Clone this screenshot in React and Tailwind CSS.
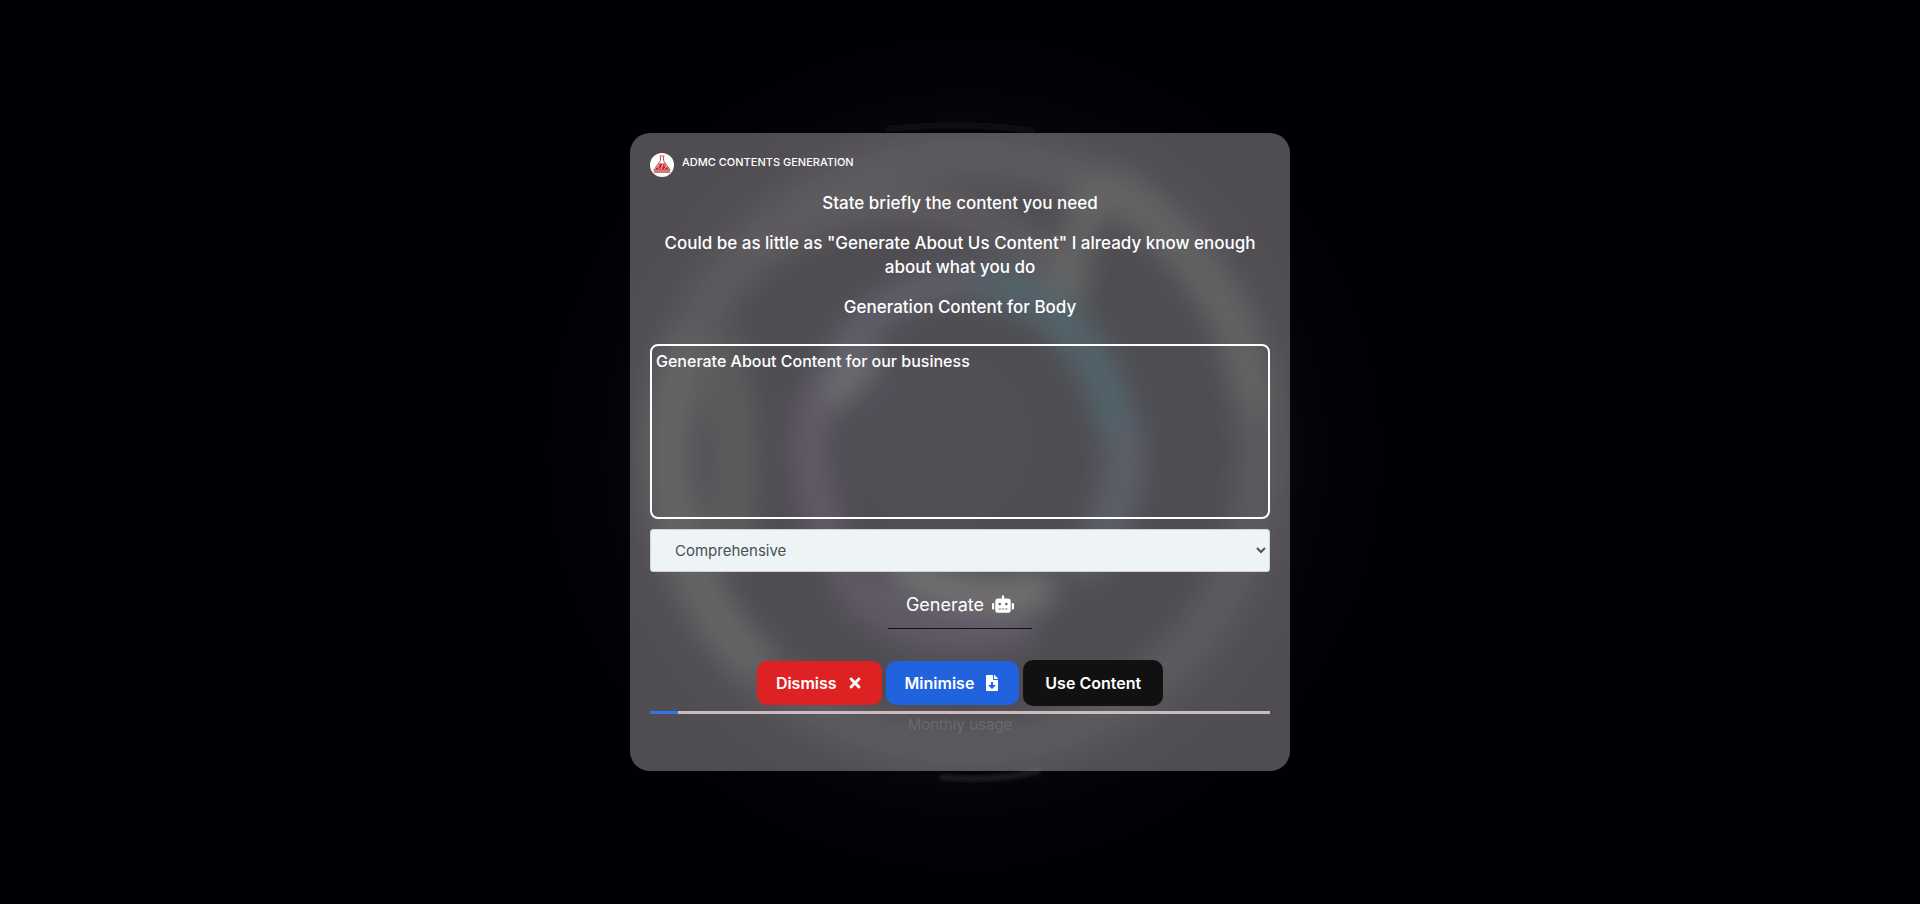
import React, { useState } from "react";
import { FaRobot, FaTimes, FaFileDownload } from "react-icons/fa";

const LENGTHS = ["Comprehensive", "Moderate", "Brief"];

// blurred rings glowing behind the dialog
const GlowRings = () => (
  <svg
    className="absolute inset-0 w-full h-full"
    viewBox="0 0 1920 904"
    preserveAspectRatio="xMidYMid slice"
    fill="none"
    aria-hidden="true"
  >
    <defs>
      <filter
        id="soft"
        x="-20%"
        y="-20%"
        width="140%"
        height="140%"
        colorInterpolationFilters="sRGB"
      >
        <feGaussianBlur stdDeviation="14" />
      </filter>
      <filter id="thin" x="-20%" y="-100%" width="140%" height="300%">
        <feGaussianBlur stdDeviation="2" />
      </filter>
      <radialGradient id="halo">
        <stop offset="0.6" stopColor="#060509" stopOpacity="0" />
        <stop offset="0.78" stopColor="#060509" />
        <stop offset="1" stopColor="#010005" stopOpacity="0" />
      </radialGradient>
      <clipPath id="panelArea">
        <rect x="630" y="133" width="660" height="638" />
      </clipPath>
    </defs>
    <circle cx="965" cy="452" r="420" fill="url(#halo)" />
    <g clipPath="url(#panelArea)">
      <g filter="url(#soft)">
        <circle cx="965" cy="452" r="296" stroke="#151518" strokeWidth="44" />
        <path d="M690 340A298 298 0 0 0 760 670" stroke="#222422" strokeWidth="42" />
        <path d="M1105 180A298 298 0 0 1 1255 410" stroke="#212220" strokeWidth="34" />
        <path d="M720 290C790 215 870 190 960 212C1020 228 1060 270 1078 300" stroke="#151517" strokeWidth="36" />
        <path d="M1100 180C1080 220 1070 260 1064 310" stroke="#252724" strokeWidth="28" />
        <path d="M715 340C735 400 740 480 725 560" stroke="#131414" strokeWidth="50" />
        <circle cx="940" cy="440" r="100" fill="#03020b" />
        <path d="M826 390C856 310 910 280 980 282" stroke="#191c2b" strokeWidth="32" />
        <path d="M980 282C1050 290 1105 350 1120 440" stroke="#06222a" strokeWidth="40" />
        <path d="M1122 430C1132 480 1112 530 1075 575" stroke="#151c29" strokeWidth="38" />
        <path d="M820 390C798 450 813 540 868 590" stroke="#1f1629" strokeWidth="32" />
        <path d="M850 580C890 630 960 645 1030 620" stroke="#191324" strokeWidth="44" />
        <path d="M895 560C945 598 1005 602 1052 585" stroke="#323431" strokeWidth="38" />
        <path d="M835 405C842 380 860 366 878 362" stroke="#353635" strokeWidth="22" />
      </g>
    </g>
    <path d="M885 129C930 124 990 124 1035 131" stroke="#131317" strokeWidth="4" filter="url(#thin)" />
    <path d="M940 777C980 781 1010 778 1040 771" stroke="#28282b" strokeWidth="4" filter="url(#thin)" />
  </svg>
);

const Logo = () => (
  <svg className="w-6 h-6 shrink-0" viewBox="0 0 24 24" fill="none" aria-hidden="true">
    <circle cx="12" cy="12" r="12" fill="#fff" />
    <path d="M9.5 3h5M10.5 3.5v4L3.8 17.2h16.400L13.5 7.5v-4" stroke="#c4474c" strokeWidth="1" />
    <path d="M9.2 10.5h5.6l4.200 6.200H5z" fill="#c3272e" />
    <path d="M9.6 11.8L7.6 14l2 1.800M14.4 11.8l2 2.200-2 1.800M12.8 11.3l-1.600 4.800" stroke="#fff" strokeWidth="0.8" />
    <path d="M3.8 19h16.400" stroke="#a84a4f" strokeWidth="1.4" />
  </svg>
);

const App = () => {
  const [prompt, setPrompt] = useState("Generate About Content for our business");
  const [length, setLength] = useState("Comprehensive");

  return (
    <div className="relative min-h-screen flex items-center justify-center overflow-hidden bg-[#010005] font-['Inter','Noto_Sans',sans-serif] text-white">
      <GlowRings />
      <main className="relative w-full max-w-[660px] rounded-[20px] bg-[#fff8ff]/31 p-5 pb-9">
        <header className="flex items-start gap-2">
          <Logo />
          <h1 className="text-[11px] leading-[18px] font-medium">
            ADMC CONTENTS GENERATION
          </h1>
        </header>

        <div className="mt-3.5 flex flex-col gap-4 text-center text-[17px] leading-6 font-medium">
          <p>State briefly the content you need</p>
          <p>
            Could be as little as "Generate About Us Content" I already know
            enough about what you do
          </p>
          <p>Generation Content for Body</p>
        </div>

        <textarea
          aria-label="Content description"
          className="mt-[25px] block w-full h-[175px] resize-none rounded-lg border-2 border-white bg-transparent px-1 py-1 text-[16px] leading-[22px] font-medium outline-none"
          value={prompt}
          onChange={(e) => setPrompt(e.target.value)}
        />

        <select
          aria-label="Content length"
          className="mt-2.5 block w-full h-[43px] rounded-[3px] border border-[#ced4da] bg-[#eef3f6] pl-5 text-[15px] text-[#495057]"
          value={length}
          onChange={(e) => setLength(e.target.value)}
        >
          {LENGTHS.map((item) => (
            <option key={item}>{item}</option>
          ))}
        </select>

        <div className="mt-2.5 flex justify-center">
          <button
            type="button"
            className="flex h-[47px] items-center gap-2 border-b border-[#111] px-[18px] pb-0.5 text-[18px]"
          >
            Generate
            <FaRobot className="text-[22px]" />
          </button>
        </div>

        <div className="mt-[31px] flex items-center justify-center gap-1 text-[16px] font-semibold">
          <button
            type="button"
            className="flex h-11 items-center gap-2.5 rounded-[10px] bg-[#de2123] px-[19px]"
          >
            Dismiss
            <FaTimes />
          </button>
          <button
            type="button"
            className="flex h-11 items-center gap-2.5 rounded-[10px] bg-[#2163df] px-[19px]"
          >
            Minimise
            <FaFileDownload />
          </button>
          <button
            type="button"
            className="h-[46px] rounded-[10px] bg-[#111] px-[22px]"
          >
            Use Content
          </button>
        </div>

        <div className="mt-[5px] h-[3px] w-full bg-[#c8bcbc]">
          <div className="h-full bg-[#3273f0]" style={{ width: "4.5%" }} />
        </div>
        <p className="text-center text-[15px] leading-[21px] text-[#6c757d]/70">
          Monthly usage
        </p>
      </main>
    </div>
  );
};

export default App;
